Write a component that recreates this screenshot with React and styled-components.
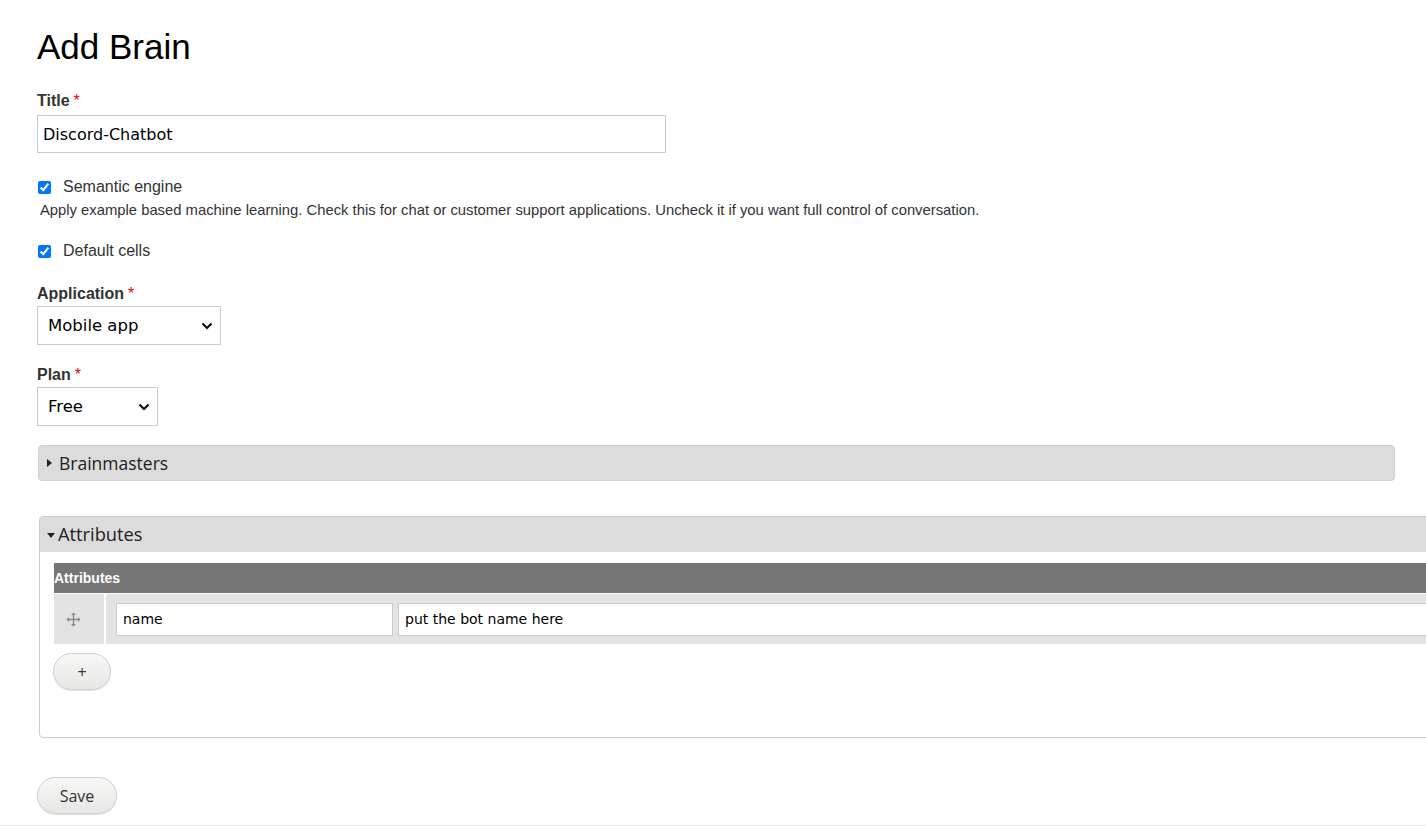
import React from "react";
import styled, { createGlobalStyle } from "styled-components";

const Global = createGlobalStyle`
  html, body { margin: 0; padding: 0; background: #fff; overflow: hidden; }
  body { font-family: "Liberation Sans", Arial, sans-serif; color: #333; }
`;

const Page = styled.div`
  width: 1426px;
  height: 826px;
  box-sizing: border-box;
  padding: 0 31px 0 37px;
  border-bottom: 1px solid #e6e6e6;
`;

const Heading = styled.h1`
  margin: 0;
  padding-top: 28px;
  font-family: "Liberation Sans", Arial, sans-serif;
  font-weight: 400;
  font-size: 35px;
  line-height: 38px;
  color: #000;
`;

const Label = styled.div`
  margin-top: ${(p) => p.$mt}px;
  margin-bottom: ${(p) => p.$mb}px;
  font-weight: 700;
  font-size: 16px;
  line-height: 18px;
  color: #333;
`;

const Req = styled.span`
  color: #e00;
  font-weight: 400;
  margin-left: 4px;
`;

const TextInput = styled.input`
  display: block;
  box-sizing: border-box;
  width: 629px;
  height: 38px;
  border: 1px solid #ccc;
  padding: 0 5px;
  font-family: "DejaVu Sans", Verdana, sans-serif;
  font-size: 16px;
  color: #000;
  outline: none;
`;

const CheckRow = styled.label`
  display: flex;
  align-items: center;
  margin-top: ${(p) => p.$mt}px;
  height: 20px;
  font-size: 16px;
  color: #333;
  input {
    margin: 0 12px 0 1px;
    width: 13px;
    height: 13px;
    accent-color: #0075ff;
  }
`;

const Description = styled.div`
  margin-top: 4px;
  padding-left: 3px;
  font-size: 14.8px;
  line-height: 18px;
  color: #333;
`;

const SelectWrap = styled.div`
  position: relative;
  width: ${(p) => p.$w}px;
`;

const Select = styled.select`
  display: block;
  box-sizing: border-box;
  width: 100%;
  height: 39px;
  border: 1px solid #ccc;
  border-radius: 0;
  background: #fff;
  padding: 0 30px 0 10px;
  appearance: none;
  -webkit-appearance: none;
  font-family: "DejaVu Sans", Verdana, sans-serif;
  font-size: 16.5px;
  color: #000;
  outline: none;
`;

const Chevron = styled.svg`
  position: absolute;
  right: 8px;
  top: 16px;
  pointer-events: none;
`;

const Details = styled.div`
  margin-top: 19px;
  margin-left: 1px;
  box-sizing: border-box;
  height: 36px;
  background: #dcdcdc;
  border: 1px solid #d2d2d2;
  border-radius: 4px;
  display: flex;
  align-items: center;
  padding-left: 8px;
`;

const SummaryText = styled.span`
  font-family: "Open Sans", "DejaVu Sans", sans-serif;
  font-size: ${(p) => p.$fs}px;
  color: #222;
  margin-left: ${(p) => p.$ml}px;
`;

const TriRight = styled.span`
  width: 0;
  height: 0;
  border-top: 4px solid transparent;
  border-bottom: 4px solid transparent;
  border-left: 5px solid #222;
`;

const TriDown = styled.span`
  width: 0;
  height: 0;
  border-left: 4.5px solid transparent;
  border-right: 4.5px solid transparent;
  border-top: 5px solid #222;
  margin-top: 3px;
`;

const Fieldset = styled.div`
  margin-top: 35px;
  margin-left: 2px;
  width: 1420px;
  box-sizing: border-box;
  border: 1px solid #ccc;
  border-radius: 4px 0 0 4px;
  padding-bottom: 47px;
`;

const FieldsetHeader = styled.div`
  height: 35px;
  background: #dcdcdc;
  display: flex;
  align-items: center;
  padding-left: 7px;
  padding-bottom: 2px;
  box-sizing: border-box;
`;

const FieldsetBody = styled.div`
  padding: 11px 0 0 14px;
`;

const TableHead = styled.div`
  height: 30px;
  background: #767676;
  color: #fff;
  font-weight: 700;
  font-size: 14px;
  display: flex;
  align-items: center;
`;

const TableRow = styled.div`
  display: flex;
  height: 50px;
  border-top: 1px solid #fff;
  background: #e3e3e3;
`;

const DragCell = styled.div`
  width: 52px;
  flex: 0 0 52px;
  box-sizing: border-box;
  padding-left: 12px;
  border-right: 2px solid #fff;
  display: flex;
  align-items: center;
`;

const Cells = styled.div`
  display: flex;
  align-items: center;
  gap: 5px;
  padding-left: 10px;
  flex: 1;
  overflow: hidden;
`;

const CellInput = styled.input`
  box-sizing: border-box;
  flex: 0 0 ${(p) => p.$w}px;
  width: ${(p) => p.$w}px;
  height: 33px;
  border: 1px solid #ccc;
  padding: 0 6px;
  font-family: "DejaVu Sans", Verdana, sans-serif;
  font-size: 14px;
  color: #000;
  background: #fff;
  outline: none;
`;

const PillButton = styled.button`
  display: block;
  box-sizing: border-box;
  width: ${(p) => p.$w}px;
  height: 37px;
  margin-top: ${(p) => p.$mt}px;
  margin-left: ${(p) => p.$ml || 0}px;
  border: 1px solid #cfcfcf;
  border-radius: 20px;
  background: linear-gradient(#f8f8f6, #e6e6e4);
  box-shadow: 0 1px 1px rgba(0, 0, 0, 0.12);
  font-family: "Open Sans", "DejaVu Sans", sans-serif;
  font-size: ${(p) => p.$fs}px;
  color: #333;
  padding: 0;
`;

const DragIcon = () => (
  <svg width="15" height="15" viewBox="0 0 15 15" fill="#888">
    <path d="M7.5 0.5 L10 3 H8.2 V6.8 H12 V5 L14.5 7.5 L12 10 V8.2 H8.2 V12 H10 L7.5 14.5 L5 12 H6.8 V8.2 H3 V10 L0.5 7.5 L3 5 V6.8 H6.8 V3 H5 Z" />
  </svg>
);

const Dropdown = ({ w, value, options }) => (
  <SelectWrap $w={w}>
    <Select defaultValue={value}>
      {options.map((o) => (
        <option key={o} value={o}>
          {o}
        </option>
      ))}
    </Select>
    <Chevron width="12" height="8" viewBox="0 0 12 8">
      <path d="M1.5 1.5 L6 6 L10.5 1.5" fill="none" stroke="#111" strokeWidth="2.2" />
    </Chevron>
  </SelectWrap>
);

export default function App() {
  return (
    <>
      <Global />
      <Page>
        <Heading>Add Brain</Heading>

        <Label $mt={26} $mb={5}>
          Title<Req>*</Req>
        </Label>
        <TextInput defaultValue="Discord-Chatbot" />

        <CheckRow $mt={24}>
          <input type="checkbox" defaultChecked />
          Semantic engine
        </CheckRow>
        <Description>
          Apply example based machine learning. Check this for chat or customer support applications. Uncheck it if you want full control of conversation.
        </Description>

        <CheckRow $mt={22}>
          <input type="checkbox" defaultChecked />
          Default cells
        </CheckRow>

        <Label $mt={24} $mb={3}>
          Application<Req>*</Req>
        </Label>
        <Dropdown w={184} value="Mobile app" options={["Mobile app", "Website"]} />

        <Label $mt={21} $mb={3}>
          Plan<Req>*</Req>
        </Label>
        <Dropdown w={121} value="Free" options={["Free", "Pro"]} />

        <Details>
          <TriRight />
          <SummaryText $ml={7} $fs={17.5}>
            Brainmasters
          </SummaryText>
        </Details>

        <Fieldset>
          <FieldsetHeader>
            <TriDown />
            <SummaryText $ml={3} $fs={18.3}>
              Attributes
            </SummaryText>
          </FieldsetHeader>
          <FieldsetBody>
            <TableHead>Attributes</TableHead>
            <TableRow>
              <DragCell>
                <DragIcon />
              </DragCell>
              <Cells>
                <CellInput $w={277} defaultValue="name" />
                <CellInput $w={1100} defaultValue="put the bot name here" />
              </Cells>
            </TableRow>
            <PillButton $w={58} $mt={9} $ml={-1} $fs={16}>
              +
            </PillButton>
          </FieldsetBody>
        </Fieldset>

        <PillButton $w={80} $mt={39} $fs={16}>
          Save
        </PillButton>
      </Page>
    </>
  );
}
